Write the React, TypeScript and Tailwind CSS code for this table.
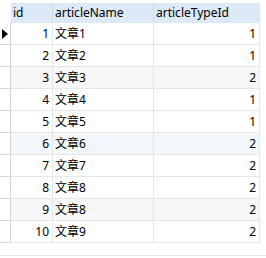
import React from "react";

const rows = [
  { id: 1, name: "文章1", typeId: 1 },
  { id: 2, name: "文章2", typeId: 1 },
  { id: 3, name: "文章3", typeId: 2 },
  { id: 4, name: "文章4", typeId: 1 },
  { id: 5, name: "文章5", typeId: 1 },
  { id: 6, name: "文章6", typeId: 2 },
  { id: 7, name: "文章7", typeId: 2 },
  { id: 8, name: "文章8", typeId: 2 },
  { id: 9, name: "文章8", typeId: 2 },
  { id: 10, name: "文章9", typeId: 2 },
];

const rowBg = (i: number) => {
  if (i === 5) return "bg-[#f2f7fc]";
  if (i === 2 || i === 8) return "bg-[#f7f7f7]";
  return "bg-white";
};

export default function App() {
  return (
    <div
      className="w-[266px] h-[258px] bg-white text-[12px] text-black overflow-hidden flex flex-col pt-[3px]"
      style={{ fontFamily: '"Noto Sans", "Noto Sans CJK SC", sans-serif' }}
    >
      {/* Header */}
      <div className="flex h-[20px] leading-[20px]">
        <div className="w-[11px]" />
        <div className="w-[42px] bg-[#dce9f6] border-r border-[#cfdbe8] pl-[2px]">id</div>
        <div className="w-[101px] bg-[#dce9f6] border-r border-[#cfdbe8] pl-[2px]">articleName</div>
        <div className="w-[106px] bg-[#dce9f6] pl-[2px]">articleTypeId</div>
      </div>

      {/* Rows */}
      {rows.map((r, i) => (
        <div key={r.id} className="flex h-[22px] leading-[21px]">
          <div className="w-[11px] border-r border-b border-[#d4d4d4] flex items-center justify-start pl-[2px]">
            {i === 0 && (
              <svg width="6" height="10" viewBox="0 0 6 10">
                <polygon points="0,0 6,5 0,10" fill="#000" />
              </svg>
            )}
          </div>
          <div className={`w-[42px] border-r border-b border-[#e6e6e6] text-right pr-[3px] ${rowBg(i)}`}>
            {r.id}
          </div>
          <div className={`w-[101px] border-r border-b border-[#e6e6e6] pl-[2px] ${rowBg(i)}`}>
            {r.name}
          </div>
          <div className={`w-[106px] border-r border-b border-[#e6e6e6] text-right pr-[3px] ${rowBg(i)}`}>
            {r.typeId}
          </div>
        </div>
      ))}

      <div className="flex-1" />
      <div className="h-[1px] bg-[#e8e8e8] mb-[2px]" />
    </div>
  );
}
